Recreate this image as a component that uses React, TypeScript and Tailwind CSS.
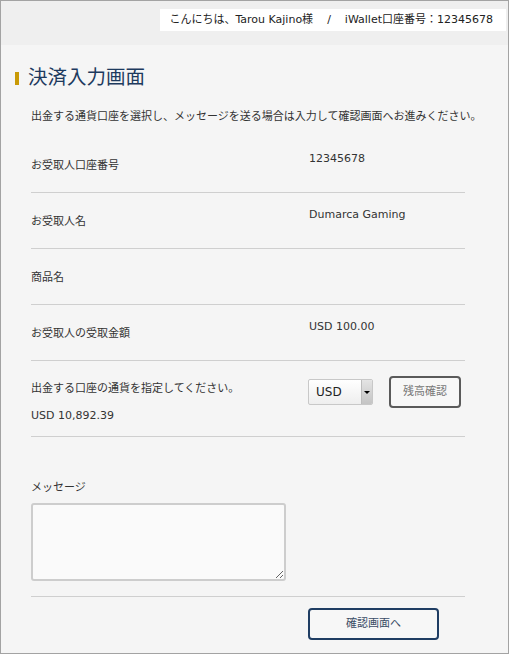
const font = "font-['DejaVu_Sans','Noto_Sans_CJK_JP',sans-serif]";

type Row = { label: string; value?: string };

const rows: Row[] = [
  { label: "お受取人口座番号", value: "12345678" },
  { label: "お受取人名", value: "Dumarca Gaming" },
  { label: "商品名" },
  { label: "お受取人の受取金額", value: "USD 100.00" },
];

export default function App() {
  return (
    <div className={`${font} h-[654px] w-[509px] overflow-hidden border border-[#a3a3a3] bg-[#f5f5f5] text-[11px] text-[#333]`}>
      {/* header */}
      <div className="flex h-[44px] justify-end bg-[#efefef] pr-[2px] pt-[8px]">
        <div className="flex h-[22px] items-center gap-[14px] bg-white pl-[9px] pr-[13px] text-[#222]">
          <span>こんにちは、Tarou Kajino様</span>
          <span>/</span>
          <span>iWallet口座番号：12345678</span>
        </div>
      </div>

      <div className="px-[30px]">
        <div className="-ml-[16px] mt-[19px] flex items-center gap-[9px]">
          <span className="h-[13px] w-[4px] bg-[#c99a06]" />
          <h1 className="text-[19.5px] leading-[28px] text-[#1d3a5e]">決済入力画面</h1>
        </div>

        <p className="mt-[17px] whitespace-nowrap text-[11px] leading-[16px]">
          出金する通貨口座を選択し、メッセージを送る場合は入力して確認画面へお進みください。
        </p>

        <div className="mt-[12px] w-[434px]">
          {rows.map((r) => (
            <div key={r.label} className="flex h-[56px] border-b border-[#cfcfcf]">
              <div className="w-[278px] pt-[21px] leading-[16px]">{r.label}</div>
              <div className="pt-[14px] leading-[16px]">{r.value}</div>
            </div>
          ))}

          <div className="flex h-[76px] border-b border-[#cfcfcf]">
            <div className="w-[277px] pt-[20px] leading-[16px]">
              <div>出金する口座の通貨を指定してください。</div>
              <div className="mt-[11px]">USD 10,892.39</div>
            </div>
            <div className="flex items-start gap-[16px] pt-[15px]">
              <div className="mt-[3px] flex h-[26px] w-[65px] items-stretch overflow-hidden rounded-[2px] border border-[#c8c8c8] bg-gradient-to-b from-white to-[#eeeeee]">
                <span className="flex flex-1 items-center pl-[7px] text-[12px] text-[#222]">USD</span>
                <span className="flex w-[11px] items-center justify-center border-l border-[#bdbdbd] bg-gradient-to-b from-[#e4e4e4] to-[#c4c4c4]">
                  <span className="h-0 w-0 border-x-[3px] border-t-[3px] border-x-transparent border-t-black" />
                </span>
              </div>
              <button className="h-[32px] w-[72px] rounded-[4px] border-2 border-[#5a5a5a] bg-[#f7f7f7] text-[11px] text-[#777]">
                残高確認
              </button>
            </div>
          </div>

          <div className="pt-[43px] leading-[16px]">メッセージ</div>
          <textarea className="mt-[7px] block h-[78px] w-[255px] resize rounded-[3px] border-2 border-[#cdcdcd] bg-[#fafafa] outline-none" />
          <div className="mt-[15px] border-b border-[#cfcfcf]" />

          <div className="flex pt-[11px]">
            <button className="ml-[277px] h-[32px] w-[131px] rounded-[4px] border-2 border-[#1f3d63] bg-[#f7f7f7] text-[11px] text-[#3b4d66]">
              確認画面へ
            </button>
          </div>
        </div>
      </div>
    </div>
  );
}
